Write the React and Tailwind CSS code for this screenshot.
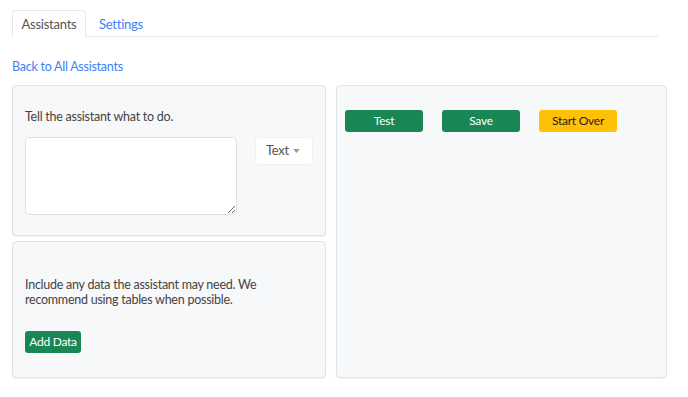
import React, { useState } from 'react';

const AssistantEditor = () => {
  const [tab, setTab] = useState('assistants');
  const [prompt, setPrompt] = useState('');

  return (
    <main className="min-h-screen bg-white px-3 pt-[10px] text-[12.5px] tracking-[-0.02em] text-gray-700" style={{ fontFamily: 'Lato, "Open Sans", sans-serif' }}>
      {/* Tabs */}
      <div className="mr-[18px] flex border-b border-[#e6e8eb]">
        <button
          onClick={() => setTab('assistants')}
          className="-mb-px h-[27px] w-[74px] rounded-t-[4px] border border-[#e6e8eb] border-b-white bg-white pt-[3px] text-[13px] text-[#555]"
        >
          Assistants
        </button>
        <button
          onClick={() => setTab('settings')}
          className="ml-[3px] h-[26px] px-[10px] pt-[3px] text-[13px] text-[#3b82f6]"
        >
          Settings
        </button>
      </div>

      <a href="#" className="mt-[21px] block h-[18px] leading-[18px] text-[#3b82f6]">
        Back to All Assistants
      </a>

      <div className="mt-[9px] grid grid-cols-[314px_331px] gap-x-[10px]">
        {/* Left column */}
        <div className="flex flex-col gap-[5px]">
          <section className="h-[151px] rounded-[4px] border border-[#dfe2e6] bg-[#f7f8fa] px-[12px] pt-[23px] shadow-[0_1px_1px_rgba(0,0,0,0.05)]">
            <p className="leading-[16px] text-[#444]">Tell the assistant what to do.</p>
            <div className="mt-[12px] flex items-start gap-[18px]">
              <textarea
                value={prompt}
                onChange={(e) => setPrompt(e.target.value)}
                className="h-[78px] w-[212px] rounded-[5px] border border-[#dcdfe3] bg-white p-2 outline-none"
              />
              <button className="flex h-[28px] w-[58px] items-center justify-between rounded-[4px] border border-[#eef0f2] bg-white pl-[10px] pr-[12px] text-[13px] text-[#555]">
                <span>Text</span>
                <svg width="7" height="4" viewBox="0 0 8 5"><path d="M0 0h8L4 5z" fill="#999" /></svg>
              </button>
            </div>
          </section>

          <section className="h-[137px] rounded-[4px] border border-[#dfe2e6] bg-[#f7f8fa] px-[12px] pt-[36px] shadow-[0_1px_1px_rgba(0,0,0,0.05)]">
            <p className="w-[250px] leading-[14.5px] text-[#444]">
              Include any data the assistant may need. We recommend using tables when possible.
            </p>
            <button className="mt-[24px] h-[22px] w-[56px] rounded-[3px] bg-[#198754] text-[12px] text-white">
              Add Data
            </button>
          </section>
        </div>

        {/* Right column */}
        <section className="rounded-[4px] border border-[#dfe2e6] bg-[#f7f8fa] px-[8px] pt-[24px] shadow-[0_1px_1px_rgba(0,0,0,0.05)]">
          <div className="flex gap-[19px]">
            <button className="h-[22px] w-[78px] rounded-[3px] bg-[#198754] text-[12px] text-white">Test</button>
            <button className="h-[22px] w-[78px] rounded-[3px] bg-[#198754] text-[12px] text-white">Save</button>
            <button className="h-[22px] w-[78px] rounded-[3px] bg-[#ffc107] text-[12px] text-[#222]">Start Over</button>
          </div>
        </section>
      </div>
    </main>
  );
};

export default AssistantEditor;
